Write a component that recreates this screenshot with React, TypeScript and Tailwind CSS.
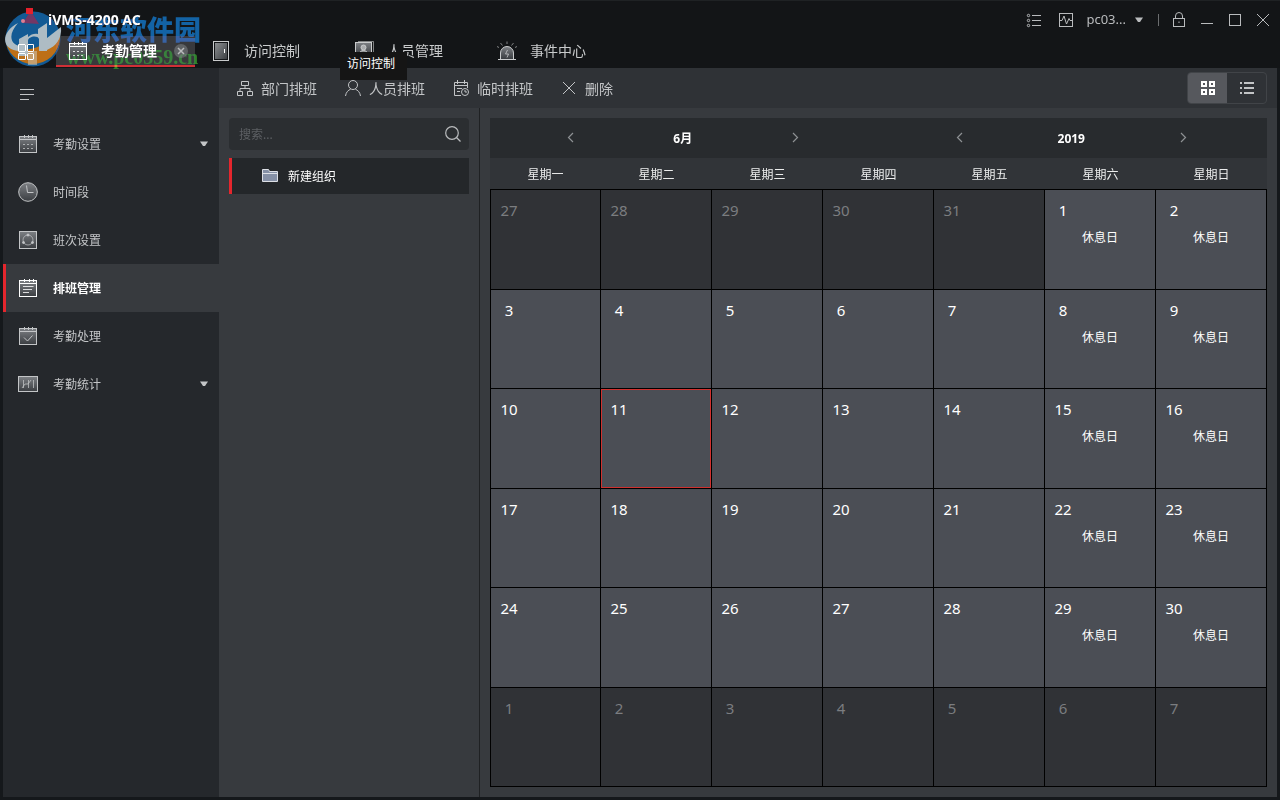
import type { ReactNode, SVGProps } from "react";
import clsx from "clsx";

type IconProps = SVGProps<SVGSVGElement>;

function Svg({ children, ...rest }: IconProps) {
  return (
    <svg width="20" height="20" viewBox="0 0 20 20" fill="none" stroke="currentColor" strokeWidth={1} aria-hidden="true" {...rest}>
      {children}
    </svg>
  );
}

const IconCalendar = (p: IconProps) => (
  <Svg {...p}>
    <rect x="1.5" y="2.5" width="17" height="16" fill="url(#metal)" />
    <path d="M1.5 5.5h17M6.5 1v3M10.5 1v3M14.5 1v3" />
    <path d="M5 10.5h2M9 10.5h2M13 10.5h2M5 14.5h2M9 14.5h2M13 14.5h2" strokeOpacity=".8" />
  </Svg>
);

const IconClock = (p: IconProps) => (
  <Svg {...p}>
    <circle cx="10" cy="10" r="9.3" fill="url(#metal)" />
    <path d="M8.5 3.5l1 7h6" />
  </Svg>
);

const IconShift = (p: IconProps) => (
  <Svg {...p}>
    <rect x="1.5" y="1.5" width="17" height="17" fill="url(#metal)" />
    <circle cx="10" cy="10" r="5" strokeOpacity=".7" />
    <circle cx="10" cy="5" r="1" fill="currentColor" />
    <circle cx="5.5" cy="12.5" r="1" fill="currentColor" />
    <circle cx="14.5" cy="12.5" r="1" fill="currentColor" />
  </Svg>
);

const IconSchedule = (p: IconProps) => (
  <Svg {...p}>
    <rect x="1.5" y="2.5" width="17" height="16" fill="url(#metal)" />
    <path d="M1.5 5.5h17M6.5 1v3M11.5 1v3M15.5 1v3" />
    <path d="M5 8.5h10.5M5 11.5h9M5 14.5h6" strokeOpacity=".8" />
  </Svg>
);

const IconHandle = (p: IconProps) => (
  <Svg {...p}>
    <rect x="1.5" y="2.5" width="17" height="16" fill="url(#metal)" />
    <path d="M1.5 5.5h17M6.5 1v3M10.5 1v3M14.5 1v3" />
    <path d="M6 11.5l3.5 3.5 5-5.5" />
  </Svg>
);

const IconStats = (p: IconProps) => (
  <Svg {...p}>
    <rect x=".5" y="2.5" width="19" height="15" fill="url(#metal)" />
    <path d="M5.5 6v8M10.5 6v8M15.5 6v8M4 14l3-4h3l3-4" strokeOpacity=".75" />
  </Svg>
);

const IconDoor = (p: IconProps) => (
  <Svg {...p}>
    <rect x="2.5" y=".5" width="15" height="19" />
    <rect x="4" y="2" width="12" height="16" fill="url(#door)" stroke="none" />
    <path d="M13.5 8v4" stroke="#fff" />
  </Svg>
);

const IconPeople = (p: IconProps) => (
  <Svg {...p}>
    <path d="M4 .5h15.5V13" strokeOpacity=".6" />
    <rect x="1.5" y="1.5" width="16" height="13" fill="url(#metal)" />
    <circle cx="9.5" cy="6.5" r="2.5" fill="currentColor" fillOpacity=".7" />
    <path d="M5 14c0-6 9-6 9 0" fill="currentColor" fillOpacity=".5" />
  </Svg>
);

const IconAlarm = (p: IconProps) => (
  <Svg {...p}>
    <path d="M3.5 18v-6a6.5 6.5 0 0113 0v6" fill="url(#metal)" />
    <path d="M1 18.5h18" />
    <path d="M10.5 9l-2 4h3L10 16.5" strokeOpacity=".8" />
    <path d="M10 .5V3M3.5 2l2 2.5M16.5 2l-2 2.5M0 5.5l2 1M20 5.5l-2 1" strokeOpacity=".6" />
  </Svg>
);

const IconCaret = (p: IconProps) => (
  <Svg width="10" height="6" viewBox="0 0 10 6" {...p}>
    <path d="M1 .5h8L6 5H4z" fill="currentColor" stroke="none" />
  </Svg>
);

const IconChevron = ({ right, ...p }: IconProps & { right?: boolean }) => (
  <Svg width="16" height="16" viewBox="0 0 16 16" strokeWidth={1.2} {...p}>
    <path d={right ? "M6 3l4.5 4.5L6 12" : "M10 3L5.5 7.5 10 12"} />
  </Svg>
);

const IconList = (p: IconProps) => (
  <Svg width="16" height="16" viewBox="0 0 16 16" {...p}>
    <circle cx="2.5" cy="3.5" r="1.2" />
    <circle cx="2.5" cy="8.5" r="1.2" />
    <circle cx="2.5" cy="13.5" r="1.2" />
    <path d="M6 3.5h9M6 8.5h9M6 13.5h9" />
  </Svg>
);

const IconPulse = (p: IconProps) => (
  <Svg width="16" height="16" viewBox="0 0 16 16" {...p}>
    <rect x="1.5" y="1.5" width="13" height="13" />
    <path d="M2 8.5h2L6 4l2.5 8L11 6.5l1 2h2" />
  </Svg>
);

const IconLock = (p: IconProps) => (
  <Svg width="16" height="16" viewBox="0 0 16 16" {...p}>
    <rect x="2.5" y="6.5" width="11" height="8" />
    <path d="M4.5 6.5V4a3.5 3.5 0 017 0v2.5M8 9.5V11" />
  </Svg>
);

const NAV = [
  { label: "考勤设置", icon: IconCalendar, caret: true },
  { label: "时间段", icon: IconClock },
  { label: "班次设置", icon: IconShift },
  { label: "排班管理", icon: IconSchedule, active: true },
  { label: "考勤处理", icon: IconHandle },
  { label: "考勤统计", icon: IconStats, caret: true },
];

const TABS = [
  { label: "考勤管理", icon: IconCalendar, active: true },
  { label: "访问控制", icon: IconDoor },
  { label: "人员管理", icon: IconPeople },
  { label: "事件中心", icon: IconAlarm },
];

const ACTIONS: { label: string; icon: ReactNode }[] = [
  { label: "部门排班", icon: <path d="M4.5 1.5h7v4h-7zM.5 11.5h5v4h-5zM10.5 11.5h5v4h-5zM8 5.5v3M3 11.5v-3h10v3" /> },
  { label: "人员排班", icon: <><circle cx="8" cy="5" r="4.5" /><path d="M.5 16c.5-4 3-6 5-6.7M15.5 16c-.5-4-3-6-5-6.7" /></> },
  {
    label: "临时排班",
    icon: (
      <>
        <path d="M8 15.5H1.5v-13h13V8M1.5 5.5h13M4.5 0v4M11.5 0v4M4 8.5h5M4 11.5h3" />
        <circle cx="12" cy="12" r="3.5" />
        <path d="M12 10v2h2" />
      </>
    ),
  },
  { label: "删除", icon: <path d="M2 2l12 12M14 2L2 14" /> },
];

const WEEKDAYS = ["星期一", "星期二", "星期三", "星期四", "星期五", "星期六", "星期日"];

// June 2019 starts on a Saturday, so the grid opens with the last five days of May
const DAYS = Array.from({ length: 42 }, (_, i) => {
  const n = i - 4;
  if (n < 1) return { day: n + 31, current: false };
  if (n > 30) return { day: n - 30, current: false };
  return { day: n, current: true };
});
const WEEKS = [0, 1, 2, 3, 4, 5].map((w) => DAYS.slice(w * 7, w * 7 + 7));
const TODAY = 11;

function Gradients() {
  return (
    <svg width="0" height="0" className="absolute" aria-hidden="true">
      <defs>
        <linearGradient id="metal" x1="0" y1="0" x2="0" y2="1">
          <stop offset="0" stopColor="#7d8084" />
          <stop offset="1" stopColor="#3a3d41" />
        </linearGradient>
        <linearGradient id="door" x1="0" y1="0" x2="1" y2="1">
          <stop offset="0" stopColor="#8c8f92" />
          <stop offset="1" stopColor="#3c3f42" />
        </linearGradient>
      </defs>
    </svg>
  );
}

function SiteMark() {
  return (
    <div className="pointer-events-none absolute left-0 top-1 flex mix-blend-lighten">
      <svg width="66" height="68" viewBox="0 0 66 68" aria-hidden="true">
        <circle cx="33" cy="34" r="27.5" fill="#0d5a94" />
        <path d="M6 38c10 12 34 8 54-10a27.5 27.5 0 01-54 10z" fill="#bd6f11" />
        <path d="M18 18C-1 28 2 46 20 46l8-1V31l-9 4v6c-10-3-10-13-1-23z" fill="#aebcc4" />
        <path d="M38 24l9-6v28h-8V34c-1-4-11-3-11 2v15h-9V34l9-5v3c3-3 7-4 10-3z" fill="#aebcc4" />
        <path d="M47 33l14-11c1 12-5 19-14 23z" fill="#aebcc4" />
        <path d="M28 46h9v14h-9z" fill="#c9bfae" fillOpacity=".6" />
        <path d="M29 8l-6 10 16 1-7-11z" fill="#743765" />
        <path d="M26 3h7v6h-7z" fill="#e5202b" />
        <circle cx="23" cy="16" r="2" fill="#df7e92" />
      </svg>
      <div className="pt-2 whitespace-nowrap">
        <div className="font-['Noto_Sans_CJK_SC',sans-serif] text-[27px] leading-8 font-black text-[#1263a5]">河东软件园</div>
        <div className="font-['Liberation_Serif',serif] text-xl leading-6 font-bold text-[#2f8229]">www.pc0359.cn</div>
      </div>
    </div>
  );
}

function Header() {
  return (
    <header className="relative -mx-[3px] h-[68px] shrink-0 border-t border-[#1f2224] bg-[#131517]">
      <div className="flex h-[35px] items-center justify-between pl-12 pr-[3px] pt-0.5 text-[#b9bbbd]">
        <h1 className="text-sm font-bold text-white">iVMS-4200 AC</h1>
        <div className="flex items-center">
          <button aria-label="任务" className="flex w-8 justify-center"><IconList /></button>
          <button aria-label="状态" className="flex w-8 justify-center"><IconPulse /></button>
          <button className="flex items-center gap-2 pl-1 text-[13px]">
            pc03...
            <IconCaret />
          </button>
          <span className="ml-3.5 mr-1.5 h-3 w-px bg-[#6b6d6f]" />
          <button aria-label="锁定" className="flex w-7 justify-center"><IconLock /></button>
          <button aria-label="最小化" className="flex w-7 justify-center">
            <Svg width="14" height="14" viewBox="0 0 14 14"><path d="M1 10.5h12" /></Svg>
          </button>
          <button aria-label="最大化" className="flex w-7 justify-center">
            <Svg width="14" height="14" viewBox="0 0 14 14"><rect x="1.5" y="1.5" width="11" height="11" /></Svg>
          </button>
          <button aria-label="关闭" className="flex w-7 justify-center">
            <Svg width="14" height="14" viewBox="0 0 14 14"><path d="M1 1l12 12M13 1L1 13" /></Svg>
          </button>
        </div>
      </div>
      <div className="flex h-[31px] text-sm text-[#c9cbcc]">
        <button aria-label="主页" className="mr-1 flex w-[52px] items-center justify-center text-white">
          <Svg width="18" height="18" viewBox="0 0 18 18">
            <path d="M1.5 1.5h7v7h-7zM10.5 1.5h6v7h-6zM1.5 10.5h7v6h-7zM10.5 10.5h6v6h-6z" />
          </Svg>
        </button>
        <nav className="flex gap-1">
          {TABS.map(({ label, icon: Icon, active }) => (
            <div
              key={label}
              className={clsx(
                "flex w-[139px] items-center justify-between border-b-2",
                active ? "border-[#cf2f36] bg-[#38393c]" : "border-transparent",
              )}
            >
              <button className={clsx("flex items-center gap-[13px] pl-3 whitespace-nowrap", active && "font-bold text-white")}>
                <Icon />
                {label}
              </button>
              {active && (
                <button aria-label="关闭标签" className="pr-1.5">
                  <Svg width="16" height="16" viewBox="0 0 16 16">
                    <circle cx="8" cy="8" r="7" fill="#5f6265" stroke="none" />
                    <path d="M5 5l6 6M11 5l-6 6" stroke="#b9bbbc" strokeWidth={1.5} />
                  </Svg>
                </button>
              )}
            </div>
          ))}
        </nav>
      </div>
      <SiteMark />
      <div role="tooltip" className="absolute left-[340px] top-[51px] z-10 bg-[#151515] pt-0.5 pr-3 pb-1.5 pl-[7px] text-xs leading-5 text-white">
        访问控制
      </div>
    </header>
  );
}

function Sidebar() {
  return (
    <aside className="w-[216px] shrink-0 bg-[#25282c] text-[#c3c5c7]">
      <button aria-label="菜单" className="flex h-[52px] items-center pl-4">
        <Svg width="16" height="12" viewBox="0 0 16 12"><path d="M1 1.5h14M1 6.5h14M1 11.5h9" /></Svg>
      </button>
      <ul>
        {NAV.map(({ label, icon: Icon, active, caret }) => (
          <li key={label}>
            <button
              className={clsx(
                "flex h-12 w-full items-center gap-[15px] border-l-3 pl-3 pr-2.5 text-xs",
                active ? "border-[#e5262d] bg-[#373a3e] font-bold text-white" : "border-transparent",
              )}
            >
              <Icon />
              <span className="pt-0.5">{label}</span>
              {caret && <IconCaret className="ml-auto" />}
            </button>
          </li>
        ))}
      </ul>
    </aside>
  );
}

function Toolbar() {
  return (
    <div className="flex h-10 shrink-0 items-center justify-between bg-[#2f3236] pl-[18px] pr-2.5 text-sm text-[#c3c5c7]">
      <div className="flex gap-7">
        {ACTIONS.map(({ label, icon }) => (
          <button key={label} className="flex items-center gap-2">
            <Svg width="16" height="17" viewBox="0 0 16 17">{icon}</Svg>
            <span className="pt-0.5">{label}</span>
          </button>
        ))}
      </div>
      <div className="flex h-8 w-20 overflow-hidden rounded-sm border border-[#414448]">
        <button aria-label="日历视图" className="flex flex-1 items-center justify-center bg-[#56585d] text-white">
          <Svg width="16" height="16" viewBox="0 0 16 16" strokeWidth={2}>
            <path d="M2 2h4v4H2zM10 2h4v4h-4zM2 10h4v4H2zM10 10h4v4h-4z" />
          </Svg>
        </button>
        <button aria-label="列表视图" className="flex flex-1 items-center justify-center">
          <Svg width="16" height="16" viewBox="0 0 16 16" strokeWidth={2}>
            <path d="M1 3h2M1 8h2M1 13h2M5 3h10M5 8h10M5 13h10" />
          </Svg>
        </button>
      </div>
    </div>
  );
}

function OrgTree() {
  return (
    <section className="w-[261px] shrink-0 border-r border-[#1f2123] p-2.5">
      <label className="flex h-8 items-center rounded-sm bg-[#2b2e31] pl-2.5 pr-2 text-[#b9bbbd]">
        <input
          type="text"
          aria-label="搜索"
          placeholder="搜索..."
          className="min-w-0 flex-1 bg-transparent pt-0.5 text-xs outline-none placeholder:text-[#5c5f63]"
        />
        <Svg width="16" height="16" viewBox="0 0 16 16" strokeWidth={1.2}>
          <circle cx="7" cy="7" r="6.3" />
          <path d="M11.5 11.5l4 4" />
        </Svg>
      </label>
      <button className="mt-2 flex h-9 w-full items-center gap-2.5 border-l-3 border-[#e5262d] bg-[#24272a] pl-[30px] text-xs text-white">
        <Svg width="16" height="14" viewBox="0 0 16 14">
          <path d="M.5 12.5V.5h6l1 2h8v10z" fill="#8590a6" stroke="#dde0e6" />
          <path d="M1 4.5h14" stroke="#dde0e6" />
        </Svg>
        <span className="pt-0.5">新建组织</span>
      </button>
    </section>
  );
}

function Stepper({ value, unit }: { value: string; unit: string }) {
  return (
    <div className="flex flex-1 items-center justify-between pl-[73px] pr-[76px]">
      <button aria-label={`上一${unit}`}><IconChevron /></button>
      <span className="pt-0.5 text-xs font-bold text-white">{value}</span>
      <button aria-label={`下一${unit}`}><IconChevron right /></button>
    </div>
  );
}

function Calendar() {
  return (
    <section className="flex min-w-0 flex-1 flex-col p-2.5">
      <div className="flex h-10 shrink-0 bg-[#282b2e] text-[#8e9194]">
        <Stepper value="6月" unit="月" />
        <Stepper value="2019" unit="年" />
      </div>
      <div className="min-h-0 flex-1">
        <table className="h-full w-full table-fixed border-separate border-spacing-0">
          <thead>
            <tr className="h-8 bg-[#313438]">
              {WEEKDAYS.map((d) => (
                <th key={d} className="border-b border-black p-0 pt-0.5 text-xs font-normal text-[#eceded]">{d}</th>
              ))}
            </tr>
          </thead>
          <tbody>
            {WEEKS.map((week, w) => (
              <tr key={w} className="h-1/6">
                {week.map(({ day, current }, i) => (
                  <td
                    key={i}
                    className={clsx(
                      "relative border-r border-b border-black p-0 pt-2.5 align-top first:border-l",
                      current ? "bg-[#4b4e55] text-white" : "bg-[#303236] text-[#7b7d80]",
                    )}
                  >
                    {current && day === TODAY && <span className="absolute inset-0 border border-[#d0312f]" />}
                    <div className="w-9 text-center text-[15px] leading-5">{day}</div>
                    {current && i > 4 && <div className="mt-2.5 text-center text-xs leading-4">休息日</div>}
                  </td>
                ))}
              </tr>
            ))}
          </tbody>
        </table>
      </div>
    </section>
  );
}

export default function App() {
  return (
    <div className="flex h-screen flex-col bg-[#15181b] px-[3px] pb-[3px] font-['Noto_Sans','Noto_Sans_CJK_SC',sans-serif]">
      <Gradients />
      <Header />
      <div className="flex min-h-0 flex-1">
        <Sidebar />
        <main className="flex min-w-0 flex-1 flex-col bg-[#373a3e]">
          <Toolbar />
          <div className="flex min-h-0 flex-1">
            <OrgTree />
            <Calendar />
          </div>
        </main>
      </div>
    </div>
  );
}
